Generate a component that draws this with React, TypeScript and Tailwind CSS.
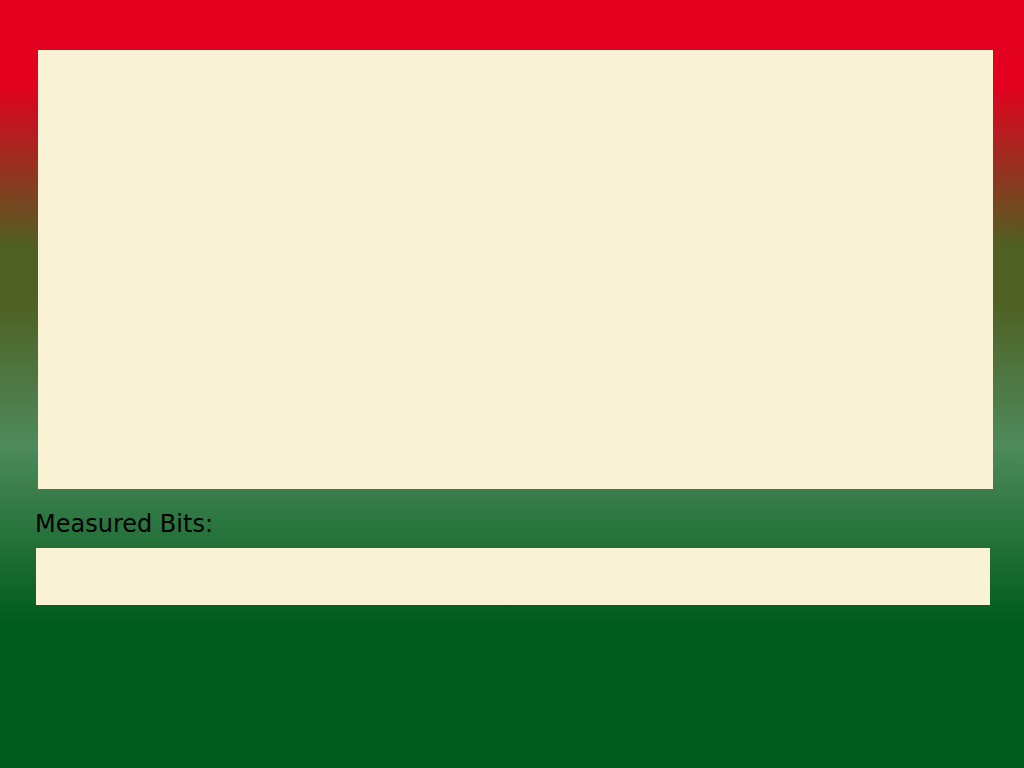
export default function App() {
  return (
    <div
      className="h-[768px] w-full overflow-hidden bg-[linear-gradient(to_bottom,#e2001e_11%,#4f6022_32%,#4f6022_39%,#4e8a5c_58%,#005c1c_81%)]"
      style={{ fontFamily: '"DejaVu Sans", sans-serif' }}
    >
      <div className="flex flex-col pt-[50px]">
        {/* canvas */}
        <div className="ml-[38px] h-[439px] w-[955px] bg-[#f9f2d4]" />
        <div className="ml-[35px] mt-[21px] text-[24px] leading-[28px] text-black">Measured Bits:</div>
        {/* bit output */}
        <div className="ml-[36px] mt-[10px] h-[57px] w-[954px] bg-[#f9f2d4]" />
      </div>
    </div>
  );
}
